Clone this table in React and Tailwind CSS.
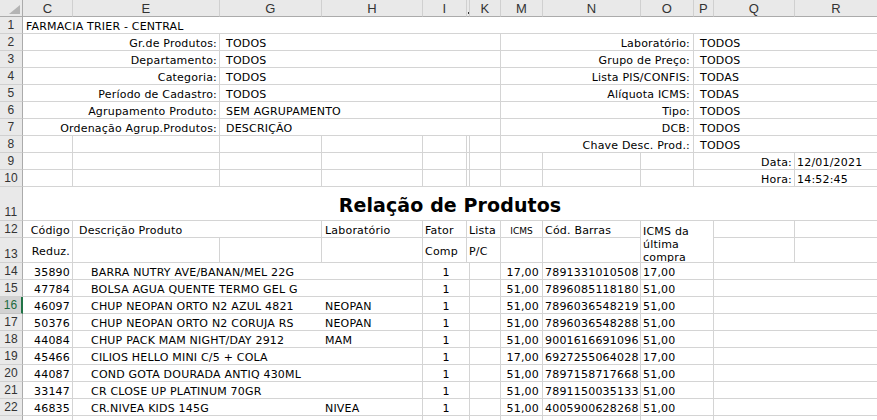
import React from "react";

const SPAN = {
  1: "col-span-1",
  2: "col-span-2",
  3: "col-span-3",
  4: "col-span-4",
  5: "col-span-5",
  13: "col-span-13",
};

function Cell({ span = 1, r = true, className = "", children }) {
  return (
    <div
      className={
        SPAN[span] +
        " min-w-0 overflow-hidden whitespace-nowrap flex items-center pt-[3px] border-b border-[#d4d4d4] " +
        (r ? "border-r " : "") +
        className
      }
    >
      {children}
    </div>
  );
}

function RowHead({ n, active = false }) {
  return (
    <div
      className={
        "flex items-end justify-center pb-[2px] leading-none text-[12px] font-['Liberation_Sans',sans-serif] border-b " +
        (active
          ? "bg-[#d2d2d2] text-[#1d6b3e] border-b-[#c4c4c4] border-r-2 border-r-[#217346]"
          : "bg-[#e9e9e9] text-[#333] border-b-[#d0d0d0] border-r border-r-[#ababab]")
      }
    >
      {n}
    </div>
  );
}

function ColHead({ label, last = false }) {
  return (
    <div
      className={
        "flex items-center justify-center pt-[1px] bg-[#e9e9e9] text-[#333] text-[13px] leading-none font-['Liberation_Sans',sans-serif] border-b border-b-[#ababab] overflow-hidden " +
        (last ? "" : "border-r border-r-[#d0d0d0]")
      }
    >
      {label}
    </div>
  );
}

const COLS = ["C", "E", "G", "H", "I", "J", "K", "M", "N", "O", "P", "Q", "R"];

const FILTERS = [
  ["Gr.de Produtos:", "TODOS", "Laboratório:", "TODOS"],
  ["Departamento:", "TODOS", "Grupo de Preço:", "TODOS"],
  ["Categoria:", "TODOS", "Lista PIS/CONFIS:", "TODAS"],
  ["Período de Cadastro:", "TODOS", "Alíquota ICMS:", "TODAS"],
  ["Agrupamento Produto:", "SEM AGRUPAMENTO", "Tipo:", "TODOS"],
  ["Ordenação Agrup.Produtos:", "DESCRIÇÃO", "DCB:", "TODOS"],
];

const DATA = [
  ["35890", "BARRA NUTRY AVE/BANAN/MEL 22G", "", "17,00", "7891331010508", "17,00"],
  ["47784", "BOLSA AGUA QUENTE TERMO GEL G", "", "51,00", "7896085118180", "51,00"],
  ["46097", "CHUP NEOPAN ORTO N2 AZUL 4821", "NEOPAN", "51,00", "7896036548219", "51,00"],
  ["50376", "CHUP NEOPAN ORTO N2 CORUJA RS", "NEOPAN", "51,00", "7896036548288", "51,00"],
  ["44084", "CHUP PACK MAM NIGHT/DAY 2912", "MAM", "51,00", "9001616691096", "51,00"],
  ["45466", "CILIOS HELLO MINI C/5 + COLA", "", "17,00", "6927255064028", "17,00"],
  ["44087", "COND GOTA DOURADA ANTIQ 430ML", "", "51,00", "7897158717668", "51,00"],
  ["33147", "CR CLOSE UP PLATINUM 70GR", "", "51,00", "7891150035133", "51,00"],
  ["46835", "CR.NIVEA KIDS 145G", "NIVEA", "51,00", "4005900628268", "51,00"],
];

function EmptyBlankRow({ n, rightLabel, rightValue, dateLabel, dateValue }) {
  return (
    <>
      <RowHead n={n} />
      <Cell />
      <Cell />
      <Cell />
      <Cell />
      <Cell />
      <Cell />
      <Cell />
      {rightLabel ? (
        <>
          <Cell span={3} className="justify-end pr-[3px]">{rightLabel}</Cell>
          <Cell span={3} r={false} className="pl-[6px]">{rightValue}</Cell>
        </>
      ) : (
        <>
          <Cell />
          <Cell />
          <Cell />
          <Cell span={2} className="justify-end pr-[2px]">{dateLabel}</Cell>
          <Cell r={false} className="pl-[2px]">{dateValue}</Cell>
        </>
      )}
    </>
  );
}

function DataRow({ n, row, active }) {
  const [code, desc, lab, icms, bar, last] = row || ["", "", "", "", "", ""];
  return (
    <>
      <RowHead n={n} active={active} />
      <Cell className="justify-end pr-[2px]">{code}</Cell>
      <Cell span={2} r={false} className="pl-[18px]">{desc}</Cell>
      <Cell className="pl-[3px]">{lab}</Cell>
      <Cell span={2} className="justify-center">{row ? "1" : ""}</Cell>
      <Cell />
      <Cell className="justify-end pr-[3px]">{icms}</Cell>
      <Cell className="pl-[2px]">{bar}</Cell>
      <Cell span={2} className="pl-[2px]">{last}</Cell>
      <Cell span={2} r={false} />
    </>
  );
}

export default function App() {
  return (
    <div className="w-[877px] h-[420px] overflow-hidden bg-white">
      <div className="grid grid-cols-[23px_50px_147px_102px_101px_44px_3px_31px_42px_98px_53px_20px_81px_82px] grid-rows-[repeat(11,17px)_34px_17px_25px_repeat(10,17px)] text-[11px] leading-[16px] tracking-[0.2px] text-black font-['DejaVu_Sans',sans-serif]">
        {/* corner */}
        <div className="flex items-end justify-end pr-[2px] pb-[2px] bg-[#e9e9e9] border-r border-b border-[#ababab]">
          <svg width="11" height="9" viewBox="0 0 11 9">
            <polygon points="11,0 11,9 0,9" fill="#b4b4b4" />
          </svg>
        </div>
        {COLS.map((c, i) =>
          c === "J" ? (
            <div
              key={c}
              className="flex items-end justify-center pb-[2px] bg-[#e9e9e9] border-b border-b-[#ababab] border-r border-r-[#d0d0d0]"
            >
              <span className="block w-[1px] h-[2px] bg-[#333]" />
            </div>
          ) : (
            <ColHead key={c} label={c} last={i === COLS.length - 1} />
          )
        )}

        {/* row 1 */}
        <RowHead n={1} />
        <Cell span={13} r={false} className="pl-[3px]">FARMACIA TRIER - CENTRAL</Cell>

        {/* rows 2-7 */}
        {FILTERS.map((f, i) => (
          <React.Fragment key={i}>
            <RowHead n={i + 2} />
            <Cell span={2} className="justify-end pr-[2px]">{f[0]}</Cell>
            <Cell span={5} className="pl-[6px]">{f[1]}</Cell>
            <Cell span={3} className="justify-end pr-[3px]">{f[2]}</Cell>
            <Cell span={3} r={false} className="pl-[6px]">{f[3]}</Cell>
          </React.Fragment>
        ))}

        <EmptyBlankRow n={8} rightLabel="Chave Desc. Prod.:" rightValue="TODOS" />
        <EmptyBlankRow n={9} dateLabel="Data:" dateValue="12/01/2021" />
        <EmptyBlankRow n={10} dateLabel="Hora:" dateValue="14:52:45" />

        {/* row 11 title */}
        <RowHead n={11} />
        <div className="col-span-13 flex items-end justify-center pb-[5px] border-b border-[#d4d4d4]">
          <span className="font-['DejaVu_Sans',sans-serif] font-bold text-[19px] leading-[19px] tracking-[0.1px]">
            Relação de Produtos
          </span>
        </div>

        {/* rows 12-13 header */}
        <RowHead n={12} />
        <Cell className="justify-end pr-[2px]">Código</Cell>
        <Cell span={2} className="pl-[6px]">Descrição Produto</Cell>
        <Cell className="pl-[3px]">Laboratório</Cell>
        <Cell className="pl-[2px]">Fator</Cell>
        <Cell span={2} className="pl-[2px]">Lista</Cell>
        <Cell className="justify-center">
          <span className="text-[9px] tracking-normal">ICMS</span>
        </Cell>
        <Cell className="pl-[2px]">Cód. Barras</Cell>
        <div className="col-span-2 row-span-2 border-r border-b border-[#d4d4d4] pl-[2px] pt-[4px] leading-[13px] whitespace-normal overflow-hidden">
          ICMS da
          <br />
          última
          <br />
          compra
        </div>
        <Cell />
        <Cell r={false} />

        <RowHead n={13} />
        <Cell className="justify-end pr-[2px]">Reduz.</Cell>
        <Cell />
        <Cell />
        <Cell />
        <Cell className="pl-[2px]">Comp</Cell>
        <Cell span={2} className="pl-[2px]">P/C</Cell>
        <Cell />
        <Cell />
        <Cell />
        <Cell r={false} />

        {DATA.map((row, i) => (
          <DataRow key={i} n={14 + i} row={row} active={14 + i === 16} />
        ))}
        <DataRow n="" row={null} />
      </div>
    </div>
  );
}
